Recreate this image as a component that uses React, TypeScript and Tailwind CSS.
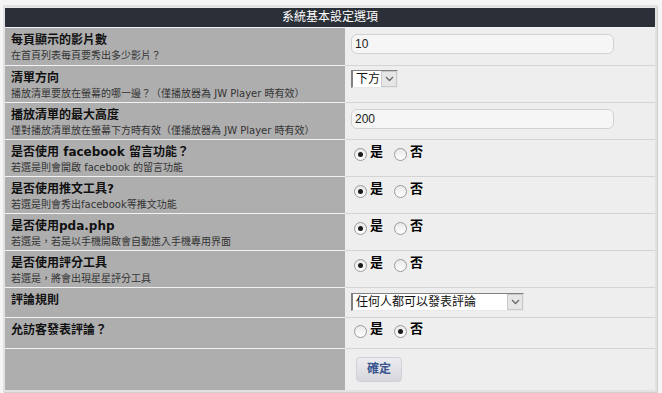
const font = { fontFamily: '"DejaVu Sans", "Noto Sans CJK TC", sans-serif' };

interface RowProps {
    title: string;
    desc?: string;
    h: string;
    pt: string;
    last?: boolean;
    children?: React.ReactNode;
}

const Row = ({ title, desc, h, pt, last, children }: RowProps) => {
    return (
        <div className={`flex ${h}`}>
            <div className={`w-[340px] shrink-0 bg-[#aeaeae] pl-[6px] pt-[4px] ${last ? '' : 'border-b border-[#f2f2f2]'}`}>
                {title && <div className="text-[12px] font-bold leading-[16px] text-[#111]">{title}</div>}
                {desc && <div className="text-[10px] leading-[15px] text-[#333]">{desc}</div>}
            </div>
            <div className={`flex-1 bg-[#eeeeee] pl-[6px] ${pt} ${last ? '' : 'border-b border-[#d4d4d4]'}`}>{children}</div>
        </div>
    );
};

const TextInput = ({ value }: { value: string }) => (
    <div className="h-[20px] w-[263px] rounded-[6px] border border-[#d2d2d2] bg-[#f6f6f6] pl-[3px] text-[12px] leading-[18px] text-[#222]" style={{ fontFamily: '"Liberation Sans", sans-serif' }}>
        {value}
    </div>
);

const Chevron = () => (
    <svg width="9" height="6" viewBox="0 0 9 6">
        <path d="M1 1 L4.5 4.5 L8 1" stroke="#666" strokeWidth="1.3" fill="none" />
    </svg>
);

const Select = ({ value, w }: { value: string; w: string }) => (
    <div className={`flex h-[18px] ${w} items-stretch overflow-hidden border-l-2 border-t border-[#808080] border-r border-r-[#e8e8e8] border-b border-b-[#e8e8e8] bg-white`}>
        <div className="flex-1 overflow-hidden whitespace-nowrap pl-[3px] text-[12px] leading-[16px] text-[#111]">{value}</div>
        <div className="flex w-[16px] shrink-0 items-center justify-center border border-[#c8c8c8] bg-[#e6e6e6]">
            <Chevron />
        </div>
    </div>
);

const Radio = ({ checked }: { checked?: boolean }) => (
    <div className="mt-[3px] flex h-[13px] w-[13px] items-center justify-center rounded-full border border-[#9a9a9a] bg-gradient-to-b from-[#e8e8e8] to-white">
        {checked && <div className="h-[5px] w-[5px] rounded-full bg-[#1a1a1a]" />}
    </div>
);

const YesNo = ({ yes }: { yes: boolean }) => (
    <div className="flex items-start pl-[3px]">
        <Radio checked={yes} />
        <span className="ml-[3px] text-[13px] font-bold leading-[14px] text-black">是</span>
        <div className="ml-[11px]">
            <Radio checked={!yes} />
        </div>
        <span className="ml-[3px] text-[13px] font-bold leading-[14px] text-black">否</span>
    </div>
);

export default function App() {
    return (
        <div className="h-[393px] w-[662px] bg-[#f5f5f5] pl-[3px] pt-[5px]" style={font}>
            <div className="w-[654px] border-2 border-[#e2e2e2] bg-[#e8e8e8] pt-px shadow-[1px_1px_0_#d0d0d0]">
                <div className="h-[20px] w-[650px] border-b border-[#f2f2f2] bg-[#2b2f37] text-center text-[12px] leading-[19px] text-white">
                    系統基本設定選項
                </div>
                <div className="w-[650px]">
                    <Row title="每頁顯示的影片數" desc="在首頁列表每頁要秀出多少影片？" h="h-[38px]" pt="pt-[6px]">
                        <TextInput value="10" />
                    </Row>
                    <Row title="清單方向" desc="播放清單要放在螢幕的哪一邊？（僅播放器為 JW Player 時有效）" h="h-[37px]" pt="pt-[4px]">
                        <Select value="下方" w="w-[47px]" />
                    </Row>
                    <Row title="播放清單的最大高度" desc="僅對播放清單放在螢幕下方時有效（僅播放器為 JW Player 時有效）" h="h-[37px]" pt="pt-[6px]">
                        <TextInput value="200" />
                    </Row>
                    <Row title="是否使用 facebook 留言功能？" desc="若選是則會開啟 facebook 的留言功能" h="h-[37px]" pt="pt-[5px]">
                        <YesNo yes />
                    </Row>
                    <Row title="是否使用推文工具?" desc="若選是則會秀出facebook等推文功能" h="h-[37px]" pt="pt-[5px]">
                        <YesNo yes />
                    </Row>
                    <Row title="是否使用pda.php" desc="若選是，若是以手機開啟會自動進入手機專用界面" h="h-[37px]" pt="pt-[5px]">
                        <YesNo yes />
                    </Row>
                    <Row title="是否使用評分工具" desc="若選是，將會出現星星評分工具" h="h-[37px]" pt="pt-[5px]">
                        <YesNo yes />
                    </Row>
                    <Row title="評論規則" h="h-[30px]" pt="pt-[5px]">
                        <Select value="任何人都可以發表評論" w="w-[173px]" />
                    </Row>
                    <Row title="允訪客發表評論？" h="h-[31px]" pt="pt-[4px]">
                        <YesNo yes={false} />
                    </Row>
                    <Row title="" h="h-[41px]" pt="pt-[7px]" last>
                        <button className="ml-[5px] h-[25px] w-[46px] rounded-[4px] border border-[#d0d0d6] bg-gradient-to-b from-[#ececf0] to-[#d6d6dc] text-[12px] font-bold text-[#3a5590]">
                            確定
                        </button>
                    </Row>
                </div>
            </div>
        </div>
    );
}
